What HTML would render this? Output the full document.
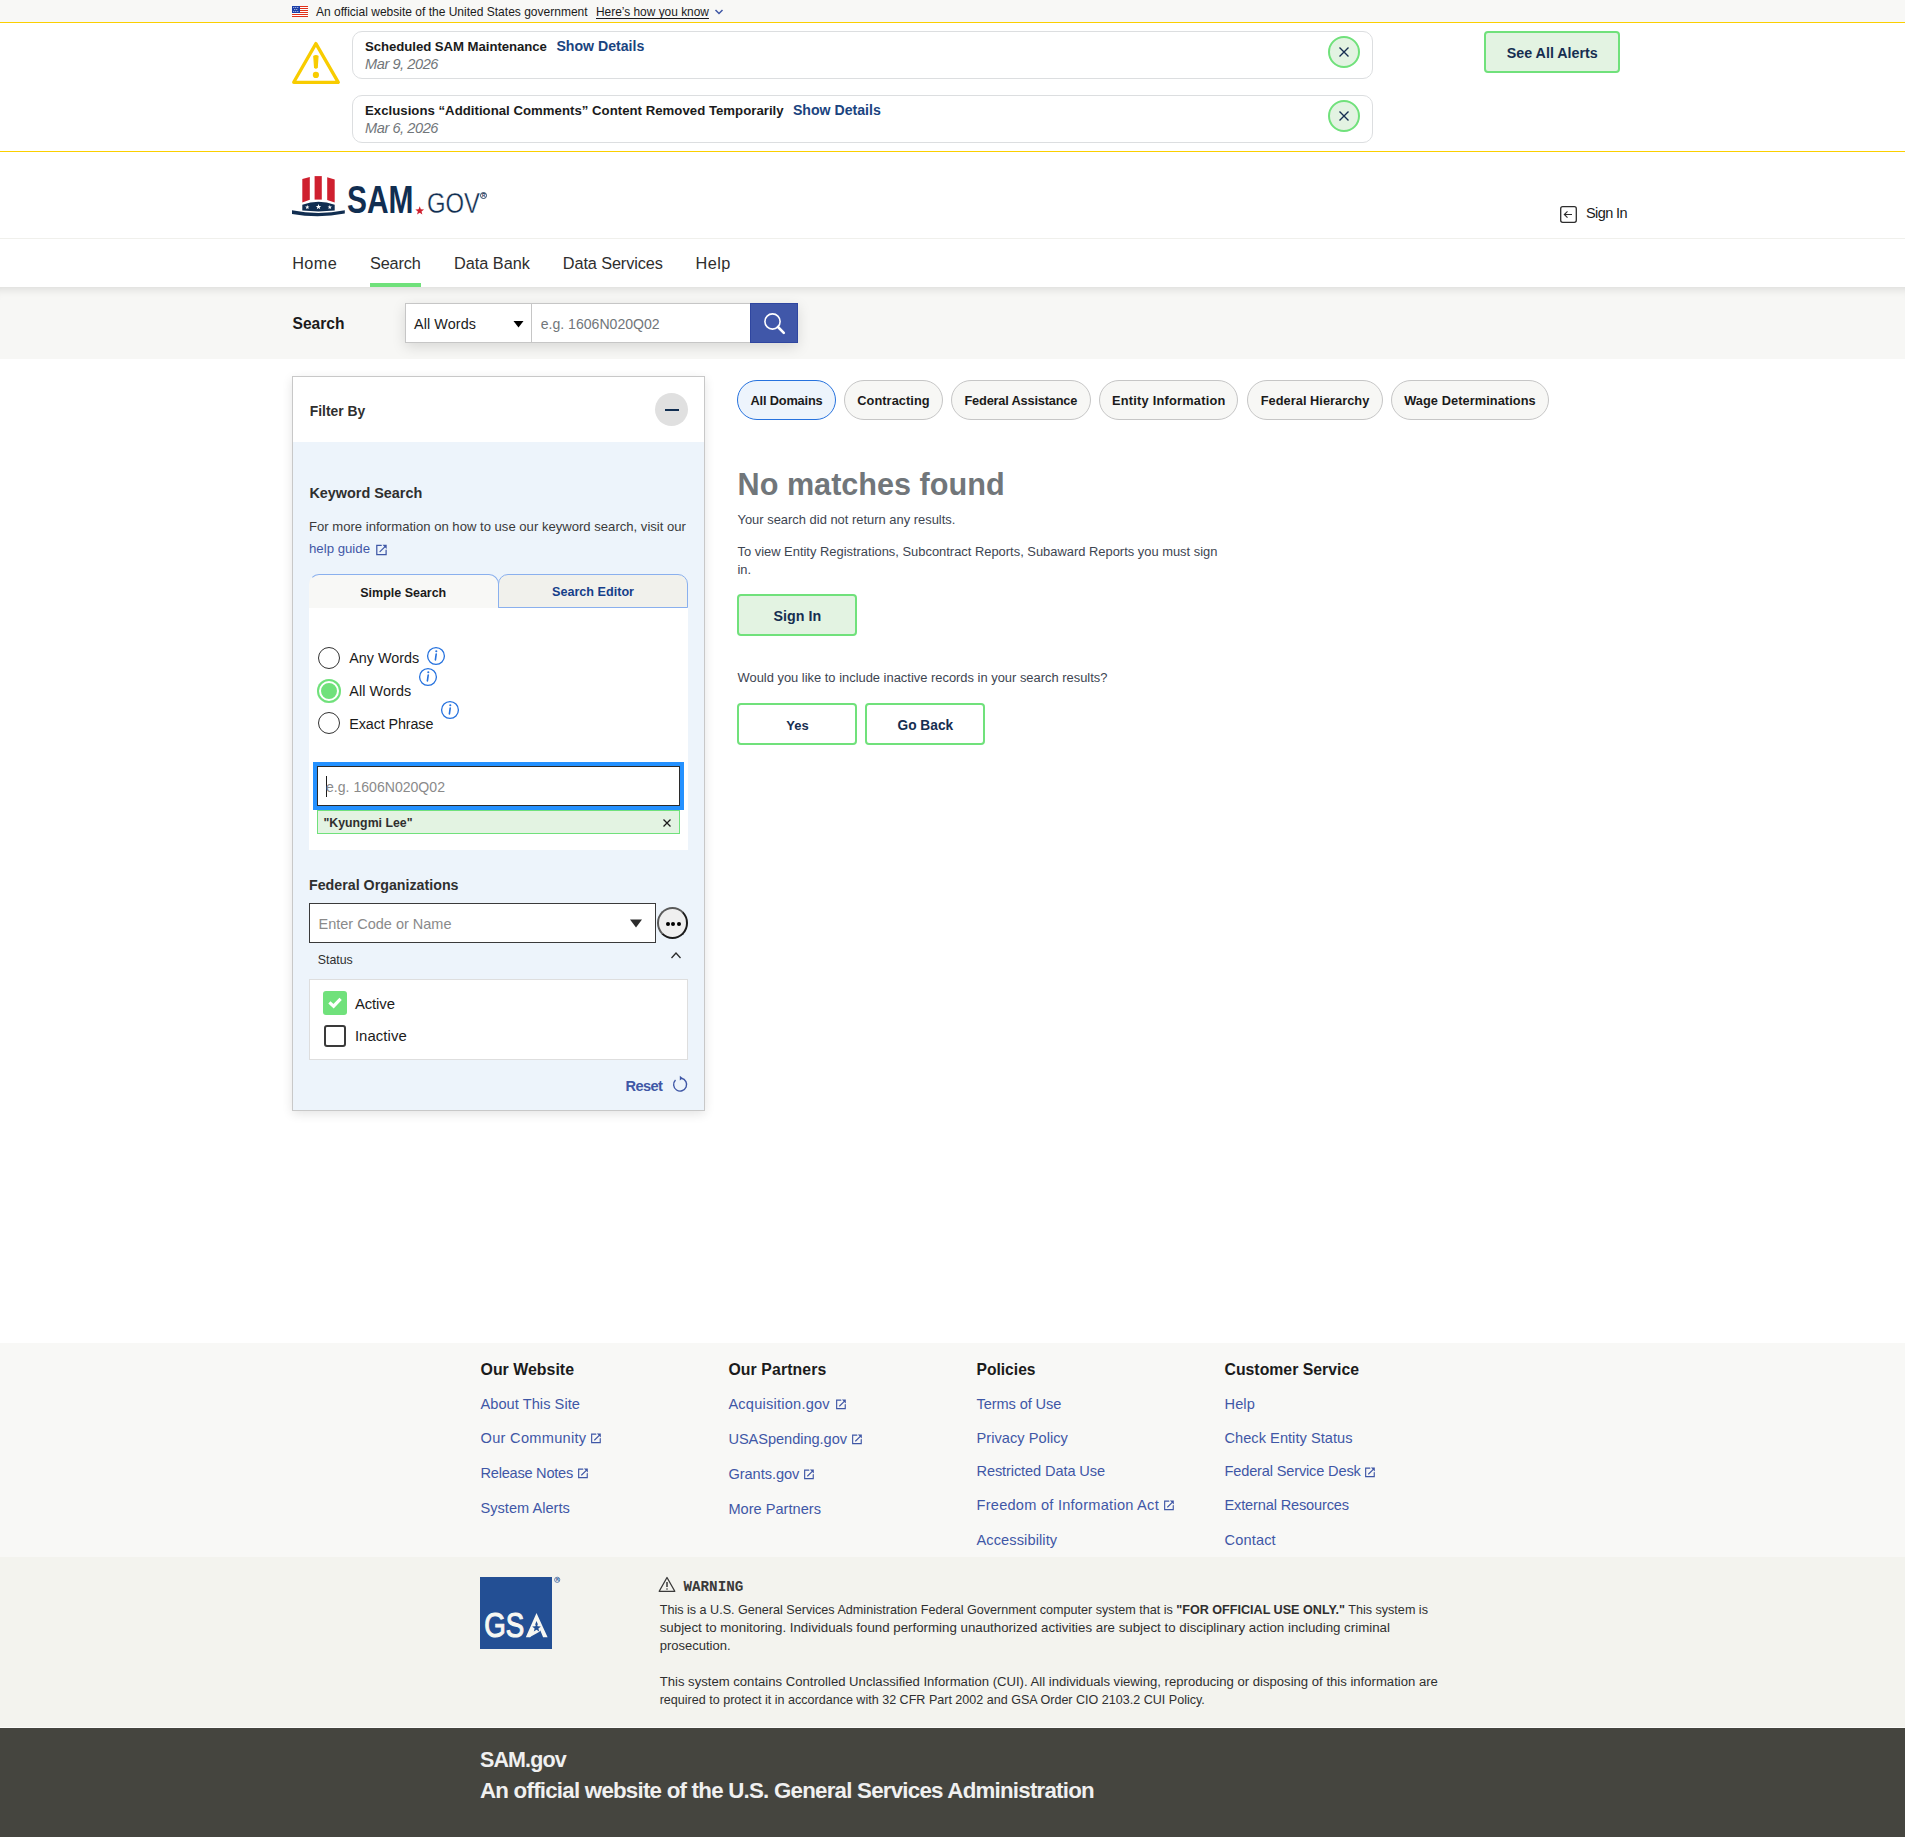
<!DOCTYPE html>
<html><head><meta charset="utf-8"><title>SAM.gov Search</title>
<style>
html,body{margin:0;padding:0;background:#fff;width:1905px;height:1837px;overflow:hidden;}
body{position:relative;font-family:"Liberation Sans",sans-serif;}
.a{position:absolute;}
.t{position:absolute;white-space:nowrap;line-height:1;}
</style></head><body>
<div class="a" style="left:0px;top:0px;width:1905px;height:22px;background:#f8f8f6"></div>
<div class="a" style="left:0px;top:22px;width:1905px;height:1px;background:#fbcf00"></div>
<svg class="a" style="left:292px;top:6px" width="16" height="11" viewBox="0 0 16 11">
<rect width="16" height="11" fill="#fff"/>
<g fill="#e0311a"><rect x="0" y="0" width="16" height="1"/><rect x="0" y="2" width="16" height="1"/><rect x="0" y="4" width="16" height="1"/><rect x="0" y="6" width="16" height="1"/><rect x="0" y="8" width="16" height="1"/><rect x="0" y="10" width="16" height="1"/></g>
<rect width="8" height="7" fill="#1c3fa8"/>
<g fill="#fff"><circle cx="1.8" cy="1.5" r=".5"/><circle cx="3.8" cy="1.5" r=".5"/><circle cx="5.8" cy="1.5" r=".5"/><circle cx="2.8" cy="3.5" r=".5"/><circle cx="4.8" cy="3.5" r=".5"/><circle cx="1.8" cy="5.5" r=".5"/><circle cx="3.8" cy="5.5" r=".5"/><circle cx="5.8" cy="5.5" r=".5"/></g>
</svg>
<div class="t" style="left:316.00px;top:6px;font-size:12.03px;font-weight:normal;font-style:normal;color:#1b1b1b;font-family:'Liberation Sans', sans-serif;">An official website of the United States government</div>
<div class="t" style="left:596.00px;top:7px;font-size:11.91px;font-weight:normal;font-style:normal;color:#1b1b1b;font-family:'Liberation Sans', sans-serif;text-decoration:underline;text-underline-offset:2px;">Here’s how you know</div>
<svg class="a" style="left:714px;top:8px" width="10" height="8" viewBox="0 0 10 8"><path d="M1.5 2 L5 5.5 L8.5 2" fill="none" stroke="#3f57a6" stroke-width="1.5"/></svg>
<div class="a" style="left:0px;top:151px;width:1905px;height:1px;background:#fbcf00"></div>
<svg class="a" style="left:290px;top:40px" width="52" height="46" viewBox="0 0 52 46">
<path d="M25.9 3.6 L48.3 42.3 L3.7 42.3 Z" fill="none" stroke="#f8cc00" stroke-width="3.3" stroke-linejoin="round"/>
<path d="M23.8 16.3 Q25.9 14.8 28 16.3 L27.2 27.6 Q25.9 28.8 24.6 27.6 Z" fill="#f8cc00" stroke="#f8cc00" stroke-width="1.2" stroke-linejoin="round"/>
<circle cx="25.9" cy="34.9" r="3.1" fill="#f8cc00"/>
</svg>
<div class="a" style="left:352px;top:31px;width:1021px;height:48px;border:1px solid #dcdee0;border-radius:10px;box-sizing:border-box;background:#fff"></div>
<div class="t" style="left:365.00px;top:40px;font-size:13.20px;font-weight:bold;font-style:normal;color:#1b1b1b;font-family:'Liberation Sans', sans-serif;letter-spacing:-0.054px;">Scheduled SAM Maintenance</div>
<div class="t" style="left:556.40px;top:39px;font-size:14.14px;font-weight:bold;font-style:normal;color:#1a4480;font-family:'Liberation Sans', sans-serif;">Show Details</div>
<div class="t" style="left:365.00px;top:57px;font-size:14.60px;font-weight:normal;font-style:italic;color:#71767a;font-family:'Liberation Sans', sans-serif;letter-spacing:-0.446px;">Mar 9, 2026</div>
<div class="a" style="left:1328px;top:36px;width:32px;height:32px;border:2px solid #70e17b;border-radius:50%;background:#e3f3e2;box-sizing:border-box"></div>
<svg class="a" style="left:1338px;top:46px" width="12" height="12" viewBox="0 0 12 12"><path d="M1.5 1.5 L10.5 10.5 M10.5 1.5 L1.5 10.5" stroke="#162e51" stroke-width="1.4"/></svg>
<div class="a" style="left:352px;top:95px;width:1021px;height:48px;border:1px solid #dcdee0;border-radius:10px;box-sizing:border-box;background:#fff"></div>
<div class="t" style="left:365.00px;top:104px;font-size:13.20px;font-weight:bold;font-style:normal;color:#1b1b1b;font-family:'Liberation Sans', sans-serif;letter-spacing:0.020px;">Exclusions “Additional Comments” Content Removed Temporarily</div>
<div class="t" style="left:792.90px;top:103px;font-size:14.14px;font-weight:bold;font-style:normal;color:#1a4480;font-family:'Liberation Sans', sans-serif;">Show Details</div>
<div class="t" style="left:365.00px;top:121px;font-size:14.60px;font-weight:normal;font-style:italic;color:#71767a;font-family:'Liberation Sans', sans-serif;letter-spacing:-0.446px;">Mar 6, 2026</div>
<div class="a" style="left:1328px;top:100px;width:32px;height:32px;border:2px solid #70e17b;border-radius:50%;background:#e3f3e2;box-sizing:border-box"></div>
<svg class="a" style="left:1338px;top:110px" width="12" height="12" viewBox="0 0 12 12"><path d="M1.5 1.5 L10.5 10.5 M10.5 1.5 L1.5 10.5" stroke="#162e51" stroke-width="1.4"/></svg>
<div class="a" style="left:1484px;top:31px;width:136px;height:42px;border:2px solid #70e17b;border-radius:4px;background:#e3f3e2;box-sizing:border-box"></div>
<div class="t" style="left:1506.80px;top:46px;font-size:14.28px;font-weight:bold;font-style:normal;color:#162e51;font-family:'Liberation Sans', sans-serif;">See All Alerts</div>
<svg class="a" style="left:290px;top:172px" width="200" height="48" viewBox="290 172 200 48">
<g fill="#cf202f">
<path d="M302.3 179.1 L309.8 177 L309.8 199.7 L302.3 202.4 Z"/>
<path d="M314.6 176.1 L321.8 176.1 L321.8 199.6 L314.6 199.6 Z"/>
<path d="M327.2 177.2 L334.7 179.4 L334.7 202.6 L327.2 200 Z"/>
</g>
<path d="M302.3 204.8 Q318.5 198.5 334.7 204.8 L334.7 210.6 Q318.5 212.2 302.3 210.6 Z" fill="#112e51"/>
<g fill="#fff"><path d="M307.30 204.90 L307.87 206.42 L309.49 206.49 L308.22 207.50 L308.65 209.06 L307.30 208.17 L305.95 209.06 L306.38 207.50 L305.11 206.49 L306.73 206.42 Z"/><path d="M318.50 204.00 L319.22 205.91 L321.26 206.00 L319.66 207.28 L320.20 209.25 L318.50 208.12 L316.80 209.25 L317.34 207.28 L315.74 206.00 L317.78 205.91 Z"/><path d="M329.80 204.90 L330.37 206.42 L331.99 206.49 L330.72 207.50 L331.15 209.06 L329.80 208.17 L328.45 209.06 L328.88 207.50 L327.61 206.49 L329.23 206.42 Z"/></g>
<path d="M292 210.3 Q318.3 215.5 344.8 210.3 L344.8 213.6 Q318.3 218.5 292 213.9 Z" fill="#112e51"/>
<text x="347" y="212.8" font-family="Liberation Sans" font-weight="bold" font-size="38.2" fill="#112e51" textLength="66.5" lengthAdjust="spacingAndGlyphs">SAM</text>
<path d="M419.70 206.20 L420.82 209.26 L424.07 209.38 L421.51 211.39 L422.40 214.52 L419.70 212.70 L417.00 214.52 L417.89 211.39 L415.33 209.38 L418.58 209.26 Z" fill="#cf202f"/>
<text x="427" y="212.8" font-family="Liberation Sans" font-size="30" fill="#112e51" stroke="#fff" stroke-width="0.35" textLength="53" lengthAdjust="spacingAndGlyphs">GOV</text>
<circle cx="483.5" cy="195.5" r="3" fill="none" stroke="#112e51" stroke-width="0.9"/>
<text x="481.9" y="197.3" font-family="Liberation Sans" font-size="4.6" font-weight="bold" fill="#112e51">R</text>
</svg>
<svg class="a" style="left:1559px;top:205px" width="20" height="20" viewBox="0 0 20 20"><rect x="1.7" y="1.7" width="15.6" height="15.6" rx="2" fill="none" stroke="#2d2d2d" stroke-width="1.3"/><path d="M5.3 9.5 L13 9.5 M8.5 6.3 L5.3 9.5 L8.5 12.7" fill="none" stroke="#2d2d2d" stroke-width="1.1"/></svg>
<div class="t" style="left:1586.00px;top:206px;font-size:14.50px;font-weight:normal;font-style:normal;color:#1b1b1b;font-family:'Liberation Sans', sans-serif;letter-spacing:-0.591px;">Sign In</div>
<div class="a" style="left:0px;top:238px;width:1905px;height:1px;background:#f0f0ec"></div>
<div class="t" style="left:292.20px;top:255px;font-size:16.30px;font-weight:normal;font-style:normal;color:#2e2e2e;font-family:'Liberation Sans', sans-serif;letter-spacing:0.381px;">Home</div>
<div class="t" style="left:370.00px;top:255px;font-size:16.30px;font-weight:normal;font-style:normal;color:#2e2e2e;font-family:'Liberation Sans', sans-serif;letter-spacing:-0.157px;">Search</div>
<div class="t" style="left:454.00px;top:255px;font-size:16.30px;font-weight:normal;font-style:normal;color:#2e2e2e;font-family:'Liberation Sans', sans-serif;letter-spacing:-0.012px;">Data Bank</div>
<div class="t" style="left:562.80px;top:255px;font-size:16.30px;font-weight:normal;font-style:normal;color:#2e2e2e;font-family:'Liberation Sans', sans-serif;letter-spacing:-0.112px;">Data Services</div>
<div class="t" style="left:695.60px;top:255px;font-size:16.30px;font-weight:normal;font-style:normal;color:#2e2e2e;font-family:'Liberation Sans', sans-serif;letter-spacing:0.370px;">Help</div>
<div class="a" style="left:370px;top:283px;width:51px;height:4px;background:#70e17b"></div>
<div class="a" style="left:0px;top:287px;width:1905px;height:72px;background:#f7f7f5;box-shadow:inset 0 10px 10px -8px rgba(0,0,0,0.12)"></div>
<div class="t" style="left:292.50px;top:316px;font-size:15.59px;font-weight:bold;font-style:normal;color:#1b1b1b;font-family:'Liberation Sans', sans-serif;">Search</div>
<div class="a" style="left:405px;top:303px;width:393px;height:40px;box-shadow:0 4px 14px rgba(0,0,0,0.13)"></div>
<div class="a" style="left:405px;top:303px;width:127px;height:40px;background:#fff;border:1px solid #c6c6c6;box-sizing:border-box"></div>
<div class="t" style="left:414.00px;top:317px;font-size:14.35px;font-weight:normal;font-style:normal;color:#1b1b1b;font-family:'Liberation Sans', sans-serif;letter-spacing:0.096px;">All Words</div>
<svg class="a" style="left:513px;top:320px" width="11" height="8" viewBox="0 0 11 8"><path d="M0.5 1 L10.5 1 L5.5 7.5 Z" fill="#000"/></svg>
<div class="a" style="left:531px;top:303px;width:220px;height:40px;background:#fff;border:1px solid #c6c6c6;box-sizing:border-box"></div>
<div class="t" style="left:540.70px;top:317px;font-size:14.08px;font-weight:normal;font-style:normal;color:#71767a;font-family:'Liberation Sans', sans-serif;">e.g. 1606N020Q02</div>
<div class="a" style="left:750px;top:303px;width:48px;height:40px;background:#4057a9;border:1px solid #2f46a0;box-sizing:border-box"></div>
<svg class="a" style="left:760px;top:310px" width="28" height="28" viewBox="0 0 28 28"><circle cx="12.5" cy="11.5" r="7.6" fill="none" stroke="#fff" stroke-width="1.6"/><path d="M18 17 L23.8 22.8" stroke="#fff" stroke-width="2.6" stroke-linecap="round"/></svg>
<div class="a" style="left:292px;top:376px;width:413px;height:735px;border:1px solid #c8c8c8;box-sizing:border-box;background:#edf4fb;box-shadow:0 3px 10px rgba(0,0,0,0.11)"></div>
<div class="a" style="left:293px;top:377px;width:411px;height:65px;background:#fff"></div>
<div class="t" style="left:309.80px;top:405px;font-size:13.87px;font-weight:bold;font-style:normal;color:#2f2f2f;font-family:'Liberation Sans', sans-serif;">Filter By</div>
<div class="a" style="left:655px;top:393px;width:33px;height:33px;background:#e0e0e0;border-radius:50%"></div>
<div class="a" style="left:665px;top:409px;width:14px;height:2px;background:#112e51"></div>
<div class="t" style="left:309.40px;top:486px;font-size:14.42px;font-weight:bold;font-style:normal;color:#2f2f2f;font-family:'Liberation Sans', sans-serif;">Keyword Search</div>
<div class="t" style="left:309.00px;top:520px;font-size:13.10px;font-weight:normal;font-style:normal;color:#3a3a3a;font-family:'Liberation Sans', sans-serif;">For more information on how to use our keyword search, visit our</div>
<div class="t" style="left:309.00px;top:542px;font-size:13.22px;font-weight:normal;font-style:normal;color:#3f57a6;font-family:'Liberation Sans', sans-serif;">help guide</div>
<svg class="a" style="left:374.5px;top:542.5px" width="13" height="13" viewBox="0 0 12 12"><path d="M5.8 2.15 L1.65 2.15 L1.65 10.65 L10.25 10.65 L10.25 6.6 M4.6 8.0 L9.3 3.3" fill="none" stroke="#3f57a6" stroke-width="1.15" stroke-linecap="round"/><path d="M6.9 1.6 L10.8 1.6 L10.8 5.5 Z" fill="#3f57a6"/></svg>
<div class="a" style="left:309px;top:574px;width:190px;height:34px;background:#f8f8f6;border:1px solid #8ab0ee;border-bottom:none;border-left-color:transparent;border-radius:10px 10px 0 0;box-sizing:border-box"></div>
<div class="a" style="left:498px;top:574px;width:190px;height:34px;background:#f1f1ec;border:1px solid #8ab0ee;border-radius:10px 10px 0 0;box-sizing:border-box"></div>
<div class="t" style="left:360.30px;top:587px;font-size:12.48px;font-weight:bold;font-style:normal;color:#1b1b1b;font-family:'Liberation Sans', sans-serif;">Simple Search</div>
<div class="t" style="left:552.00px;top:586px;font-size:12.61px;font-weight:bold;font-style:normal;color:#163f8a;font-family:'Liberation Sans', sans-serif;">Search Editor</div>
<div class="a" style="left:309px;top:608px;width:379px;height:242px;background:#fff"></div>
<div class="a" style="left:318px;top:647px;width:22px;height:22px;border-radius:50%;border:1.5px solid #333;box-sizing:border-box;background:#fff"></div>
<div class="t" style="left:349.30px;top:651px;font-size:14.35px;font-weight:normal;font-style:normal;color:#1b1b1b;font-family:'Liberation Sans', sans-serif;letter-spacing:0.010px;">Any Words</div>
<svg class="a" style="left:426px;top:646px" width="20" height="20" viewBox="0 0 20 20"><circle cx="10" cy="10" r="8.4" fill="none" stroke="#2672de" stroke-width="1.3"/><circle cx="10.3" cy="5.3" r="1.05" fill="#2672de"/><path d="M10.2 8.1 L9.4 13.9" stroke="#2672de" stroke-width="1.6" stroke-linecap="round"/></svg>
<div class="a" style="left:317px;top:678.5px;width:24px;height:24px;border-radius:50%;background:#70e17b;box-shadow:inset 0 0 0 2px #70e17b, inset 0 0 0 4px #fff"></div>
<div class="t" style="left:349.30px;top:684px;font-size:14.35px;font-weight:normal;font-style:normal;color:#1b1b1b;font-family:'Liberation Sans', sans-serif;letter-spacing:0.096px;">All Words</div>
<svg class="a" style="left:418px;top:667px" width="20" height="20" viewBox="0 0 20 20"><circle cx="10" cy="10" r="8.4" fill="none" stroke="#2672de" stroke-width="1.3"/><circle cx="10.3" cy="5.3" r="1.05" fill="#2672de"/><path d="M10.2 8.1 L9.4 13.9" stroke="#2672de" stroke-width="1.6" stroke-linecap="round"/></svg>
<div class="a" style="left:318px;top:712px;width:22px;height:22px;border-radius:50%;border:1.5px solid #333;box-sizing:border-box;background:#fff"></div>
<div class="t" style="left:349.30px;top:717px;font-size:14.35px;font-weight:normal;font-style:normal;color:#1b1b1b;font-family:'Liberation Sans', sans-serif;letter-spacing:-0.112px;">Exact Phrase</div>
<svg class="a" style="left:440px;top:700px" width="20" height="20" viewBox="0 0 20 20"><circle cx="10" cy="10" r="8.4" fill="none" stroke="#2672de" stroke-width="1.3"/><circle cx="10.3" cy="5.3" r="1.05" fill="#2672de"/><path d="M10.2 8.1 L9.4 13.9" stroke="#2672de" stroke-width="1.6" stroke-linecap="round"/></svg>
<div class="a" style="left:313px;top:762px;width:371px;height:48px;background:#2491ff"></div>
<div class="a" style="left:317px;top:766px;width:363px;height:40px;background:#fff;border:1.5px solid #2b2b2b;box-sizing:border-box"></div>
<div class="a" style="left:326px;top:776px;width:1px;height:21px;background:#1b1b1b"></div>
<div class="t" style="left:326.00px;top:780px;font-size:14.08px;font-weight:normal;font-style:normal;color:#8a8a8a;font-family:'Liberation Sans', sans-serif;">e.g. 1606N020Q02</div>
<div class="a" style="left:317px;top:810px;width:363px;height:24px;background:#e3f3e2;border:1px solid #70e17b;box-sizing:border-box"></div>
<div class="t" style="left:323.50px;top:817px;font-size:12.32px;font-weight:bold;font-style:normal;color:#2f2f2f;font-family:'Liberation Sans', sans-serif;">"Kyungmi Lee"</div>
<svg class="a" style="left:662px;top:818px" width="10" height="10" viewBox="0 0 10 10"><path d="M1.5 1.5 L8.5 8.5 M8.5 1.5 L1.5 8.5" stroke="#1b1b1b" stroke-width="1.3"/></svg>
<div class="t" style="left:309.00px;top:878px;font-size:14.24px;font-weight:bold;font-style:normal;color:#2f2f2f;font-family:'Liberation Sans', sans-serif;">Federal Organizations</div>
<div class="a" style="left:309px;top:903px;width:347px;height:40px;background:#fff;border:1px solid #3a3a3a;box-sizing:border-box"></div>
<div class="t" style="left:318.50px;top:917px;font-size:14.50px;font-weight:normal;font-style:normal;color:#8a8a8a;font-family:'Liberation Sans', sans-serif;">Enter Code or Name</div>
<svg class="a" style="left:629px;top:918px" width="14" height="11" viewBox="0 0 14 11"><path d="M1 1.5 L13 1.5 L7 9.5 Z" fill="#2b2b2b"/></svg>
<div class="a" style="left:657px;top:907px;width:31px;height:32px;background:#efefef;border:2px solid #1b1b1b;border-top-color:#5a5a5a;border-left-color:#5a5a5a;border-radius:50%;box-sizing:border-box"></div>
<div class="a" style="left:665.5px;top:922px;width:4.0px;height:4px;background:#000;border-radius:50%"></div>
<div class="a" style="left:671.3px;top:922px;width:4.0px;height:4px;background:#000;border-radius:50%"></div>
<div class="a" style="left:677px;top:922px;width:4px;height:4px;background:#000;border-radius:50%"></div>
<div class="t" style="left:317.80px;top:954px;font-size:12.35px;font-weight:normal;font-style:normal;color:#2f2f2f;font-family:'Liberation Sans', sans-serif;">Status</div>
<svg class="a" style="left:670px;top:950px" width="12" height="10" viewBox="0 0 12 10"><path d="M1.5 8 L6 3 L10.5 8" fill="none" stroke="#2b2b2b" stroke-width="1.3"/></svg>
<div class="a" style="left:309px;top:979px;width:379px;height:81px;background:#fff;border:1px solid #dedede;box-sizing:border-box"></div>
<div class="a" style="left:323px;top:991px;width:24px;height:24px;background:#70e17b;border-radius:3px"></div>
<svg class="a" style="left:323px;top:991px" width="24" height="24" viewBox="0 0 24 24"><path d="M6.4 11.4 L10.6 15.2 L17.6 7.9" fill="none" stroke="#fff" stroke-width="3.2"/></svg>
<div class="t" style="left:354.90px;top:997px;font-size:14.90px;font-weight:normal;font-style:normal;color:#1b1b1b;font-family:'Liberation Sans', sans-serif;letter-spacing:-0.096px;">Active</div>
<div class="a" style="left:324px;top:1025px;width:22px;height:22px;border:2px solid #3a3a3a;border-radius:3px;box-sizing:border-box;background:#fff"></div>
<div class="t" style="left:354.90px;top:1029px;font-size:14.90px;font-weight:normal;font-style:normal;color:#1b1b1b;font-family:'Liberation Sans', sans-serif;letter-spacing:0.082px;">Inactive</div>
<div class="t" style="left:625.40px;top:1079px;font-size:14.60px;font-weight:bold;font-style:normal;color:#3f57a6;font-family:'Liberation Sans', sans-serif;letter-spacing:-0.552px;">Reset</div>
<svg class="a" style="left:671px;top:1075px" width="18" height="18" viewBox="0 0 18 18"><path d="M10.5 3.2 A6.5 6.5 0 1 1 4.5 5" fill="none" stroke="#3f57a6" stroke-width="1.4"/><path d="M8.8 0.8 L11.8 3.2 L8.8 5.6 Z" fill="#3f57a6"/></svg>
<div class="a" style="left:737px;top:380px;width:99px;height:40px;background:#edf4fc;border:1px solid #2672de;border-radius:20px;box-sizing:border-box"></div>
<div class="t" style="left:750.50px;top:395px;font-size:12.80px;font-weight:bold;font-style:normal;color:#1b1b1b;font-family:'Liberation Sans', sans-serif;letter-spacing:-0.179px;">All Domains</div>
<div class="a" style="left:844px;top:380px;width:99px;height:40px;background:#f7f7f5;border:1px solid #c6c6c6;border-radius:20px;box-sizing:border-box"></div>
<div class="t" style="left:857.25px;top:395px;font-size:12.80px;font-weight:bold;font-style:normal;color:#1b1b1b;font-family:'Liberation Sans', sans-serif;letter-spacing:0.053px;">Contracting</div>
<div class="a" style="left:951px;top:380px;width:140px;height:40px;background:#f7f7f5;border:1px solid #c6c6c6;border-radius:20px;box-sizing:border-box"></div>
<div class="t" style="left:964.50px;top:395px;font-size:12.80px;font-weight:bold;font-style:normal;color:#1b1b1b;font-family:'Liberation Sans', sans-serif;letter-spacing:-0.200px;">Federal Assistance</div>
<div class="a" style="left:1099px;top:380px;width:139px;height:40px;background:#f7f7f5;border:1px solid #c6c6c6;border-radius:20px;box-sizing:border-box"></div>
<div class="t" style="left:1112.05px;top:395px;font-size:12.80px;font-weight:bold;font-style:normal;color:#1b1b1b;font-family:'Liberation Sans', sans-serif;letter-spacing:0.222px;">Entity Information</div>
<div class="a" style="left:1247px;top:380px;width:136px;height:40px;background:#f7f7f5;border:1px solid #c6c6c6;border-radius:20px;box-sizing:border-box"></div>
<div class="t" style="left:1260.75px;top:395px;font-size:12.80px;font-weight:bold;font-style:normal;color:#1b1b1b;font-family:'Liberation Sans', sans-serif;letter-spacing:0.027px;">Federal Hierarchy</div>
<div class="a" style="left:1391px;top:380px;width:158px;height:40px;background:#f7f7f5;border:1px solid #c6c6c6;border-radius:20px;box-sizing:border-box"></div>
<div class="t" style="left:1404.15px;top:395px;font-size:12.80px;font-weight:bold;font-style:normal;color:#1b1b1b;font-family:'Liberation Sans', sans-serif;letter-spacing:0.064px;">Wage Determinations</div>
<div class="t" style="left:737.60px;top:469px;font-size:30.61px;font-weight:bold;font-style:normal;color:#71767a;font-family:'Liberation Sans', sans-serif;">No matches found</div>
<div class="t" style="left:737.50px;top:514px;font-size:12.93px;font-weight:normal;font-style:normal;color:#3d4551;font-family:'Liberation Sans', sans-serif;">Your search did not return any results.</div>
<div class="t" style="left:737.50px;top:546px;font-size:12.91px;font-weight:normal;font-style:normal;color:#3d4551;font-family:'Liberation Sans', sans-serif;">To view Entity Registrations, Subcontract Reports, Subaward Reports you must sign</div>
<div class="t" style="left:737.50px;top:564px;font-size:12.90px;font-weight:normal;font-style:normal;color:#3d4551;font-family:'Liberation Sans', sans-serif;">in.</div>
<div class="a" style="left:737px;top:594px;width:120px;height:42px;background:#e3f3e2;border:2px solid #70e17b;border-radius:4px;box-sizing:border-box"></div>
<div class="t" style="left:773.60px;top:609px;font-size:14.25px;font-weight:bold;font-style:normal;color:#162e51;font-family:'Liberation Sans', sans-serif;">Sign In</div>
<div class="t" style="left:737.50px;top:672px;font-size:12.91px;font-weight:normal;font-style:normal;color:#3d4551;font-family:'Liberation Sans', sans-serif;">Would you like to include inactive records in your search results?</div>
<div class="a" style="left:737px;top:703px;width:120px;height:42px;background:#fff;border:2px solid #70e17b;border-radius:4px;box-sizing:border-box"></div>
<div class="t" style="left:786.30px;top:719px;font-size:12.99px;font-weight:bold;font-style:normal;color:#162e51;font-family:'Liberation Sans', sans-serif;">Yes</div>
<div class="a" style="left:865px;top:703px;width:120px;height:42px;background:#fff;border:2px solid #70e17b;border-radius:4px;box-sizing:border-box"></div>
<div class="t" style="left:897.50px;top:719px;font-size:13.73px;font-weight:bold;font-style:normal;color:#162e51;font-family:'Liberation Sans', sans-serif;">Go Back</div>
<div class="a" style="left:0px;top:1343px;width:1905px;height:214px;background:#f8f8f6"></div>
<div class="a" style="left:0px;top:1557px;width:1905px;height:170px;background:#f3f3ee"></div>
<div class="a" style="left:0px;top:1727px;width:1905px;height:1px;background:#fcfcfa"></div>
<div class="a" style="left:0px;top:1728px;width:1905px;height:109px;background:#45453f"></div>
<div class="t" style="left:480.50px;top:1362px;font-size:15.93px;font-weight:bold;font-style:normal;color:#1b1b1b;font-family:'Liberation Sans', sans-serif;">Our Website</div>
<div class="t" style="left:728.40px;top:1362px;font-size:15.80px;font-weight:bold;font-style:normal;color:#1b1b1b;font-family:'Liberation Sans', sans-serif;letter-spacing:0.118px;">Our Partners</div>
<div class="t" style="left:976.50px;top:1362px;font-size:15.61px;font-weight:bold;font-style:normal;color:#1b1b1b;font-family:'Liberation Sans', sans-serif;">Policies</div>
<div class="t" style="left:1224.50px;top:1362px;font-size:15.82px;font-weight:bold;font-style:normal;color:#1b1b1b;font-family:'Liberation Sans', sans-serif;">Customer Service</div>
<div class="t" style="left:480.50px;top:1397px;font-size:14.60px;font-weight:normal;font-style:normal;color:#3f57a6;font-family:'Liberation Sans', sans-serif;letter-spacing:0.051px;">About This Site</div>
<div class="t" style="left:480.50px;top:1431px;font-size:14.60px;font-weight:normal;font-style:normal;color:#3f57a6;font-family:'Liberation Sans', sans-serif;letter-spacing:0.291px;">Our Community</div>
<svg class="a" style="left:590px;top:1432.2px" width="12" height="12" viewBox="0 0 12 12"><path d="M5.8 2.15 L1.65 2.15 L1.65 10.65 L10.25 10.65 L10.25 6.6 M4.6 8.0 L9.3 3.3" fill="none" stroke="#3f57a6" stroke-width="1.15" stroke-linecap="round"/><path d="M6.9 1.6 L10.8 1.6 L10.8 5.5 Z" fill="#3f57a6"/></svg>
<div class="t" style="left:480.50px;top:1466px;font-size:14.60px;font-weight:normal;font-style:normal;color:#3f57a6;font-family:'Liberation Sans', sans-serif;letter-spacing:-0.251px;">Release Notes</div>
<svg class="a" style="left:576.5px;top:1467.3px" width="12" height="12" viewBox="0 0 12 12"><path d="M5.8 2.15 L1.65 2.15 L1.65 10.65 L10.25 10.65 L10.25 6.6 M4.6 8.0 L9.3 3.3" fill="none" stroke="#3f57a6" stroke-width="1.15" stroke-linecap="round"/><path d="M6.9 1.6 L10.8 1.6 L10.8 5.5 Z" fill="#3f57a6"/></svg>
<div class="t" style="left:480.50px;top:1501px;font-size:14.60px;font-weight:normal;font-style:normal;color:#3f57a6;font-family:'Liberation Sans', sans-serif;letter-spacing:0.012px;">System Alerts</div>
<div class="t" style="left:728.40px;top:1397px;font-size:14.60px;font-weight:normal;font-style:normal;color:#3f57a6;font-family:'Liberation Sans', sans-serif;letter-spacing:0.220px;">Acquisition.gov</div>
<svg class="a" style="left:834.5px;top:1398.2px" width="12" height="12" viewBox="0 0 12 12"><path d="M5.8 2.15 L1.65 2.15 L1.65 10.65 L10.25 10.65 L10.25 6.6 M4.6 8.0 L9.3 3.3" fill="none" stroke="#3f57a6" stroke-width="1.15" stroke-linecap="round"/><path d="M6.9 1.6 L10.8 1.6 L10.8 5.5 Z" fill="#3f57a6"/></svg>
<div class="t" style="left:728.40px;top:1432px;font-size:14.60px;font-weight:normal;font-style:normal;color:#3f57a6;font-family:'Liberation Sans', sans-serif;letter-spacing:-0.047px;">USASpending.gov</div>
<svg class="a" style="left:850.7px;top:1433.3px" width="12" height="12" viewBox="0 0 12 12"><path d="M5.8 2.15 L1.65 2.15 L1.65 10.65 L10.25 10.65 L10.25 6.6 M4.6 8.0 L9.3 3.3" fill="none" stroke="#3f57a6" stroke-width="1.15" stroke-linecap="round"/><path d="M6.9 1.6 L10.8 1.6 L10.8 5.5 Z" fill="#3f57a6"/></svg>
<div class="t" style="left:728.40px;top:1467px;font-size:14.60px;font-weight:normal;font-style:normal;color:#3f57a6;font-family:'Liberation Sans', sans-serif;letter-spacing:-0.041px;">Grants.gov</div>
<svg class="a" style="left:803px;top:1467.9px" width="12" height="12" viewBox="0 0 12 12"><path d="M5.8 2.15 L1.65 2.15 L1.65 10.65 L10.25 10.65 L10.25 6.6 M4.6 8.0 L9.3 3.3" fill="none" stroke="#3f57a6" stroke-width="1.15" stroke-linecap="round"/><path d="M6.9 1.6 L10.8 1.6 L10.8 5.5 Z" fill="#3f57a6"/></svg>
<div class="t" style="left:728.40px;top:1502px;font-size:14.60px;font-weight:normal;font-style:normal;color:#3f57a6;font-family:'Liberation Sans', sans-serif;letter-spacing:0.008px;">More Partners</div>
<div class="t" style="left:976.50px;top:1397px;font-size:14.60px;font-weight:normal;font-style:normal;color:#3f57a6;font-family:'Liberation Sans', sans-serif;letter-spacing:-0.099px;">Terms of Use</div>
<div class="t" style="left:976.50px;top:1431px;font-size:14.60px;font-weight:normal;font-style:normal;color:#3f57a6;font-family:'Liberation Sans', sans-serif;letter-spacing:0.045px;">Privacy Policy</div>
<div class="t" style="left:976.50px;top:1464px;font-size:14.60px;font-weight:normal;font-style:normal;color:#3f57a6;font-family:'Liberation Sans', sans-serif;letter-spacing:-0.112px;">Restricted Data Use</div>
<div class="t" style="left:976.50px;top:1498px;font-size:14.60px;font-weight:normal;font-style:normal;color:#3f57a6;font-family:'Liberation Sans', sans-serif;letter-spacing:0.247px;">Freedom of Information Act</div>
<svg class="a" style="left:1162.6px;top:1499.4px" width="12" height="12" viewBox="0 0 12 12"><path d="M5.8 2.15 L1.65 2.15 L1.65 10.65 L10.25 10.65 L10.25 6.6 M4.6 8.0 L9.3 3.3" fill="none" stroke="#3f57a6" stroke-width="1.15" stroke-linecap="round"/><path d="M6.9 1.6 L10.8 1.6 L10.8 5.5 Z" fill="#3f57a6"/></svg>
<div class="t" style="left:976.50px;top:1533px;font-size:14.60px;font-weight:normal;font-style:normal;color:#3f57a6;font-family:'Liberation Sans', sans-serif;letter-spacing:0.092px;">Accessibility</div>
<div class="t" style="left:1224.50px;top:1397px;font-size:14.60px;font-weight:normal;font-style:normal;color:#3f57a6;font-family:'Liberation Sans', sans-serif;letter-spacing:0.094px;">Help</div>
<div class="t" style="left:1224.50px;top:1431px;font-size:14.60px;font-weight:normal;font-style:normal;color:#3f57a6;font-family:'Liberation Sans', sans-serif;letter-spacing:0.032px;">Check Entity Status</div>
<div class="t" style="left:1224.50px;top:1464px;font-size:14.60px;font-weight:normal;font-style:normal;color:#3f57a6;font-family:'Liberation Sans', sans-serif;letter-spacing:-0.168px;">Federal Service Desk</div>
<svg class="a" style="left:1364px;top:1465.6px" width="12" height="12" viewBox="0 0 12 12"><path d="M5.8 2.15 L1.65 2.15 L1.65 10.65 L10.25 10.65 L10.25 6.6 M4.6 8.0 L9.3 3.3" fill="none" stroke="#3f57a6" stroke-width="1.15" stroke-linecap="round"/><path d="M6.9 1.6 L10.8 1.6 L10.8 5.5 Z" fill="#3f57a6"/></svg>
<div class="t" style="left:1224.50px;top:1498px;font-size:14.60px;font-weight:normal;font-style:normal;color:#3f57a6;font-family:'Liberation Sans', sans-serif;letter-spacing:-0.161px;">External Resources</div>
<div class="t" style="left:1224.50px;top:1533px;font-size:14.60px;font-weight:normal;font-style:normal;color:#3f57a6;font-family:'Liberation Sans', sans-serif;letter-spacing:0.141px;">Contact</div>
<svg class="a" style="left:479px;top:1576px" width="84" height="74" viewBox="0 0 84 74">
<rect x="1" y="1" width="72" height="72" fill="#234f94"/>
<text x="5.3" y="61.2" font-family="Liberation Sans" font-size="34.5" fill="#f7f7f2" stroke="#f7f7f2" stroke-width="1.1" textLength="40" lengthAdjust="spacingAndGlyphs">GS</text>
<path d="M46.8 61.2 L57.5 36.9 L68.6 61.2 L64.1 61.2 L57.5 45 L51.2 61.2 Z" fill="#f7f7f2"/>
<path d="M53 48.7 L62 48.7 L63.5 52.5 L60 56 L50.6 61.2 L51 55.5 Z" fill="#f7f7f2"/>
<path d="M57.50 47.20 L58.68 50.18 L61.87 50.38 L59.40 52.42 L60.20 55.52 L57.50 53.80 L54.80 55.52 L55.60 52.42 L53.13 50.38 L56.32 50.18 Z" fill="#234f94"/>
<circle cx="78.2" cy="3.8" r="2.6" fill="none" stroke="#234f94" stroke-width="0.7"/><text x="76.9" y="5.4" font-family="Liberation Sans" font-size="4" font-weight="bold" fill="#234f94">R</text>
</svg>
<svg class="a" style="left:658px;top:1576px" width="18" height="17" viewBox="0 0 18 17"><path d="M9 1.5 L16.8 15.3 L1.2 15.3 Z" fill="none" stroke="#3a3a3a" stroke-width="1.3" stroke-linejoin="round"/><path d="M9 6 L9 11" stroke="#3a3a3a" stroke-width="1.5"/><circle cx="9" cy="13" r=".8" fill="#3a3a3a"/></svg>
<div class="t" style="left:683.40px;top:1580px;font-size:14.28px;font-weight:bold;font-style:normal;color:#3a3a3a;font-family:'Liberation Mono', monospace;">WARNING</div>
<div class="t" style="left:659.7px;top:1604px;font-size:12.6px;color:#2f2f2f">This is a U.S. General Services Administration Federal Government computer system that is <b>"FOR OFFICIAL USE ONLY."</b> This system is</div>
<div class="t" style="left:659.7px;top:1621px;font-size:13.3px;color:#2f2f2f">subject to monitoring. Individuals found performing unauthorized activities are subject to disciplinary action including criminal</div>
<div class="t" style="left:659.7px;top:1639px;font-size:13.0px;color:#2f2f2f">prosecution.</div>
<div class="t" style="left:659.7px;top:1675px;font-size:13.12px;color:#2f2f2f">This system contains Controlled Unclassified Information (CUI). All individuals viewing, reproducing or disposing of this information are</div>
<div class="t" style="left:659.7px;top:1694px;font-size:12.55px;color:#2f2f2f">required to protect it in accordance with 32 CFR Part 2002 and GSA Order CIO 2103.2 CUI Policy.</div>
<div class="t" style="left:480.00px;top:1750px;font-size:21.50px;font-weight:bold;font-style:normal;color:#f0f0f0;font-family:'Liberation Sans', sans-serif;letter-spacing:-0.896px;">SAM.gov</div>
<div class="t" style="left:480.00px;top:1780px;font-size:22.30px;font-weight:bold;font-style:normal;color:#f0f0f0;font-family:'Liberation Sans', sans-serif;letter-spacing:-0.764px;">An official website of the U.S. General Services Administration</div>
</body></html>
